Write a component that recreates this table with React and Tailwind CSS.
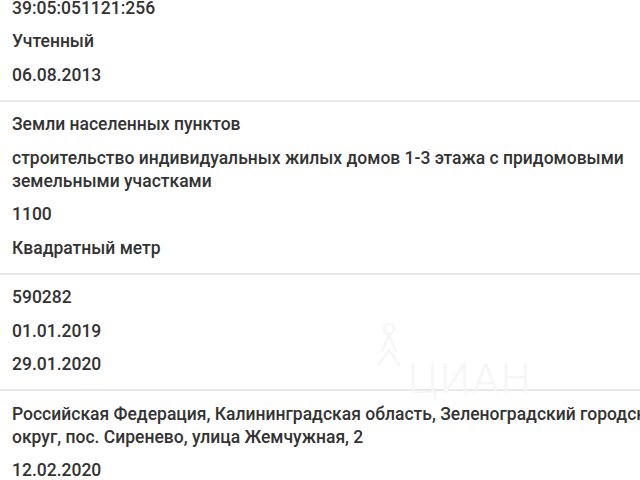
import React from "react";

const sections = [
  ["39:05:051121:256", "Учтенный", "06.08.2013"],
  [
    "Земли населенных пунктов",
    "строительство индивидуальных жилых домов 1-3 этажа с придомовыми земельными участками",
    "1100",
    "Квадратный метр",
  ],
  ["590282", "01.01.2019", "29.01.2020"],
  [
    "Российская Федерация, Калининградская область, Зеленоградский городской округ, пос. Сиренево, улица Жемчужная, 2",
    "12.02.2020",
  ],
];

const App = () => {
  return (
    <div
      className="relative w-[640px] h-[480px] overflow-hidden bg-white text-[#333333]"
      style={{ fontFamily: "Roboto, 'Noto Sans', sans-serif" }}
    >
      <div className="w-[700px] -mt-[15px]">
        {sections.map((items, i) => (
          <div
            key={i}
            className="flex flex-col gap-[10.5px] px-3 pt-[11.5px] pb-[13px] border-b-2 border-[#e8e8e8]"
          >
            {items.map((text, j) => (
              <div key={j} className="text-[17.5px] leading-[23px] font-medium">
                {text}
              </div>
            ))}
          </div>
        ))}
      </div>

      {/* faint watermark */}
      <div className="absolute left-[372px] top-[322px] pointer-events-none text-[#f6f6f6]">
        <svg width="34" height="46" viewBox="0 0 34 46" fill="none" stroke="currentColor" strokeWidth="2.5">
          <circle cx="17" cy="7" r="5" />
          <path d="M17 13 L10 30 M17 13 L24 30 M6 44 L17 28 L28 44" />
        </svg>
        <div className="absolute left-[36px] top-[36px] text-[42px] leading-none tracking-wider whitespace-nowrap font-light">
          ЦИАН
        </div>
      </div>
    </div>
  );
};

export default App;
